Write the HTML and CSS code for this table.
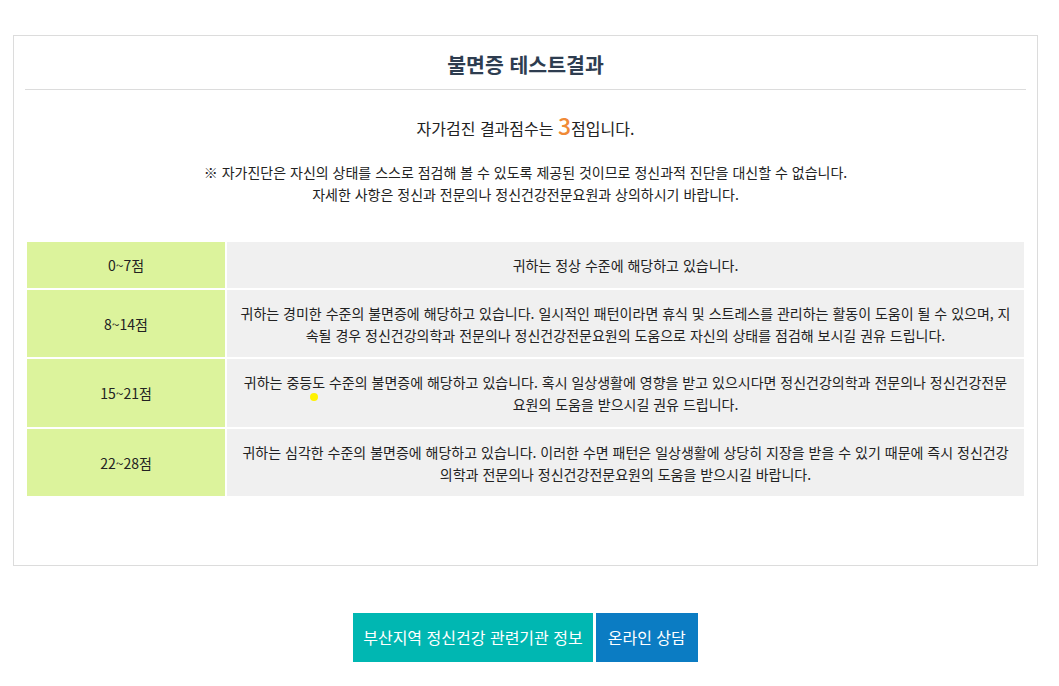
FILE: index.html
```html
<!DOCTYPE html>
<html lang="ko">
<head>
<meta charset="utf-8">
<title>불면증 테스트결과</title>
<link rel="stylesheet" href="styles.css">
</head>
<body>
<div class="page">
  <section class="result-box">
    <h2 class="result-title">불면증 테스트결과</h2>
    <p class="score-line">자가검진 결과점수는 <span class="score">3</span>점입니다.</p>
    <p class="notice">※ 자가진단은 자신의 상태를 스스로 점검해 볼 수 있도록 제공된 것이므로 정신과적 진단을 대신할 수 없습니다.<br>자세한 사항은 정신과 전문의나 정신건강전문요원과 상의하시기 바랍니다.</p>
    <table class="score-table">
      <tbody>
        <tr>
          <th>0~7점</th>
          <td>귀하는 정상 수준에 해당하고 있습니다.</td>
        </tr>
        <tr>
          <th>8~14점</th>
          <td>귀하는 경미한 수준의 불면증에 해당하고 있습니다. 일시적인 패턴이라면 휴식 및 스트레스를 관리하는 활동이 도움이 될 수 있으며, 지속될 경우 정신건강의학과 전문의나 정신건강전문요원의 도움으로 자신의 상태를 점검해 보시길 권유 드립니다.</td>
        </tr>
        <tr>
          <th>15~21점</th>
          <td>귀하는 중등도 수준의 불면증에 해당하고 있습니다. 혹시 일상생활에 영향을 받고 있으시다면 정신건강의학과 전문의나 정신건강전문요원의 도움을 받으시길 권유 드립니다.</td>
        </tr>
        <tr>
          <th>22~28점</th>
          <td>귀하는 심각한 수준의 불면증에 해당하고 있습니다. 이러한 수면 패턴은 일상생활에 상당히 지장을 받을 수 있기 때문에 즉시 정신건강의학과 전문의나 정신건강전문요원의 도움을 받으시길 바랍니다.</td>
        </tr>
      </tbody>
    </table>
  </section>
  <div class="actions">
    <a class="btn btn-teal" href="#">부산지역 정신건강 관련기관 정보</a>
    <a class="btn btn-blue" href="#">온라인 상담</a>
  </div>
</div>
<span class="cursor-dot"></span>
</body>
</html>
```
FILE: styles.css
```css
* { box-sizing: border-box; }
html, body { margin: 0; padding: 0; background: #fff; }
body {
  font-family: "Noto Sans CJK KR", "Noto Sans", sans-serif;
  color: #222;
  position: relative;
}
.page {
  padding: 35px 21px 0 13px;
}
.result-box {
  border: 1px solid #dcdcdc;
  padding: 0 11px 66px;
  height: 531px;
}
.result-title {
  margin: 0;
  padding: 13px 0 10px;
  line-height: 30px;
  font-size: 20.5px;
  font-weight: 700;
  color: #2e3d50;
  text-align: center;
  border-bottom: 1px solid #dcdcdc;
}
.score-line {
  margin: 23px 0 0;
  text-align: center;
  font-size: 16px;
  line-height: 24px;
  color: #222;
}
.score {
  color: #f08a36;
  font-size: 23px;
  font-weight: 500;
}
.notice {
  margin: 21px 0 0;
  text-align: center;
  font-size: 14px;
  line-height: 22px;
  color: #222;
}
.score-table {
  width: 100%;
  margin-top: 35px;
  border-collapse: separate;
  border-spacing: 2px;
  font-size: 14px;
  line-height: 22px;
}
.score-table th {
  width: 198px;
  background: #dcf39c;
  font-weight: 400;
  color: #222;
  text-align: center;
  padding: 12px 10px 11.5px;
}
.score-table td {
  background: #f0f0f0;
  text-align: center;
  padding: 12px 12px 11.5px;
  color: #222;
}
.actions {
  display: flex;
  justify-content: center;
  gap: 3px;
  margin-top: 47px;
}
.btn {
  display: block;
  height: 49px;
  line-height: 49px;
  font-size: 16px;
  color: #fff;
  text-decoration: none;
}
.btn-teal { background: #00b7b2; padding: 0 10px; }
.btn-blue { background: #0b7cc3; padding: 0 12px; }
.cursor-dot {
  position: absolute;
  left: 310px;
  top: 393px;
  width: 8px;
  height: 8px;
  border-radius: 50%;
  background: #fff200;
}
```
